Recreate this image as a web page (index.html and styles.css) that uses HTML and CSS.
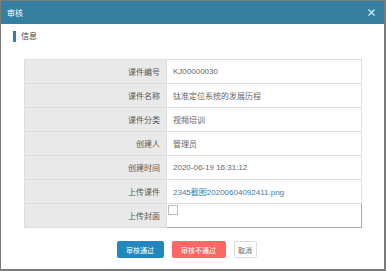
FILE: index.html
```html
<!DOCTYPE html>
<html lang="zh">

<head>
    <meta charset="UTF-8">
    <meta name="viewport" content="width=device-width, initial-scale=1.0">
    <title>审核</title>
    <link rel="stylesheet" href="styles.css">
</head>

<body>
    <div class="dialog">
        <div class="dialog-header">
            <span class="dialog-title">审核</span>
            <span class="dialog-close">
                <svg width="7" height="7" viewBox="0 0 7 7">
                    <path d="M0.5 0.5 L6.5 6.5 M6.5 0.5 L0.5 6.5" stroke="#dbe9f0" stroke-width="1.2" fill="none"/>
                </svg>
            </span>
        </div>

        <div class="dialog-body">
            <div class="section-title">信息</div>

            <table class="info-table">
                <tr>
                    <td class="label">课件编号</td>
                    <td class="value">KJ00000030</td>
                </tr>
                <tr>
                    <td class="label">课件名称</td>
                    <td class="value">钛准定位系统的发展历程</td>
                </tr>
                <tr>
                    <td class="label">课件分类</td>
                    <td class="value">视频培训</td>
                </tr>
                <tr>
                    <td class="label">创建人</td>
                    <td class="value">管理员</td>
                </tr>
                <tr>
                    <td class="label">创建时间</td>
                    <td class="value">2020-06-19 16:31:12</td>
                </tr>
                <tr>
                    <td class="label">上传课件</td>
                    <td class="value"><a class="file-link" href="#">2345截图20200604092411.png</a></td>
                </tr>
                <tr>
                    <td class="label">上传封面</td>
                    <td class="value cover-cell"><span class="cover-img"></span></td>
                </tr>
            </table>

            <div class="actions">
                <button class="btn btn-pass">审核通过</button>
                <button class="btn btn-reject">审核不通过</button>
                <button class="btn btn-cancel">取消</button>
            </div>
        </div>
    </div>
</body>

</html>
```

FILE: styles.css
```css
body {
    margin: 0;
    background: #fff;
    font-family: 'Liberation Sans', 'Noto Sans CJK SC', sans-serif;
}

.dialog {
    box-sizing: border-box;
    width: 386px;
    height: 271px;
    border: 1px solid #7b7b7b;
    border-right-width: 2px;
    border-bottom-width: 2px;
    background: #fff;
}

.dialog-header {
    height: 23px;
    background: #347fa0;
    display: flex;
    align-items: center;
    justify-content: space-between;
    padding: 0 9px 0 6px;
}

.dialog-title {
    color: #fff;
    font-size: 8px;
}

.dialog-close {
    display: flex;
}

.dialog-body {
    padding: 7px 0 0 0;
}

.section-title {
    margin-left: 12px;
    padding-left: 5px;
    border-left: 3px solid #347fa0;
    height: 11px;
    line-height: 11px;
    font-size: 8px;
    color: #444;
}

.info-table {
    margin: 17px 0 0 23px;
    width: 338px;
    border-collapse: collapse;
    font-size: 8px;
}

.info-table td {
    border: 1px solid #dedede;
    height: 23px;
    padding: 0 6px;
}

.label {
    width: 129px;
    background: #e9e9e9;
    text-align: right;
    color: #555;
}

.value {
    color: #666;
}

.file-link {
    color: #3b7cab;
    text-decoration: none;
}

.cover-cell {
    vertical-align: top;
    padding: 0 !important;
    border-right: 1px solid #aaa !important;
    border-bottom: 1px solid #aaa !important;
}

.cover-img {
    display: block;
    width: 8px;
    height: 8px;
    margin: 1px 0 0 1px;
    border: 1px solid #bbb;
}

.actions {
    display: flex;
    justify-content: center;
    gap: 8px;
    margin-top: 13px;
    padding-right: 12px;
}

.btn {
    height: 17px;
    padding: 0 7px;
    font-size: 7px;
    font-family: inherit;
    border: none;
    border-radius: 2px;
    color: #fff;
    cursor: pointer;
}

.btn-pass {
    background: #2187bd;
    width: 47px;
}

.btn-reject {
    background: #fb6868;
    width: 54px;
}

.btn-cancel {
    background: #fff;
    color: #666;
    border: 1px solid #ddd;
    width: 23px;
    padding: 0;
}
```
